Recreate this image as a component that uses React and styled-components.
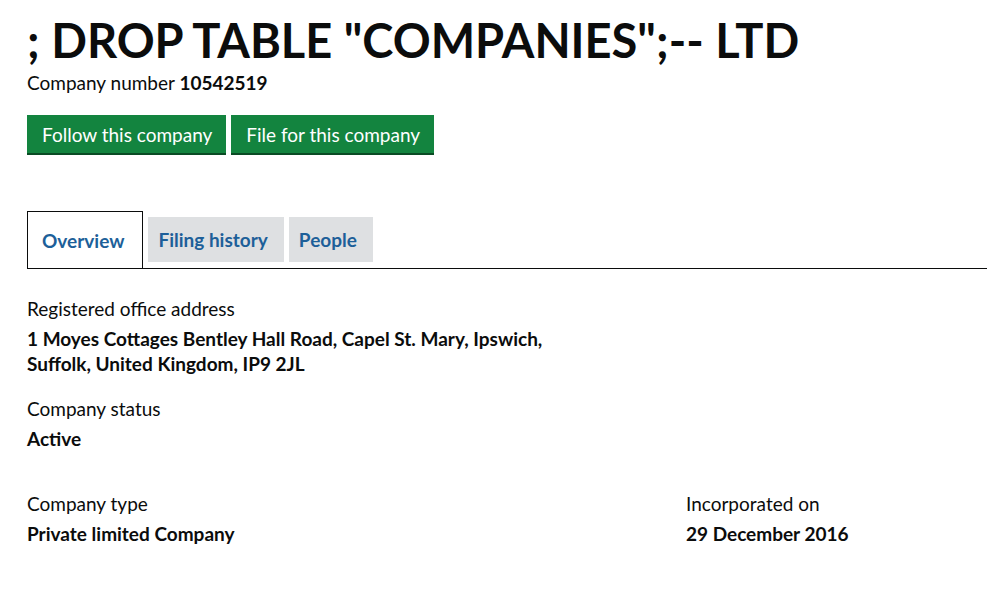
import React from "react";
import styled, { createGlobalStyle } from "styled-components";

const GlobalStyle = createGlobalStyle`
  html, body {
    margin: 0;
    padding: 0;
    background: #ffffff;
  }
  body {
    font-family: Lato, "Liberation Sans", Arial, sans-serif;
    color: #0b0c0c;
  }
`;

const Page = styled.div`
  padding: 13px 8px 0 27px;
`;

const Title = styled.h1`
  margin: 0;
  font-size: 47px;
  line-height: 54px;
  font-weight: 700;
  color: #0b0c0c;
`;

const Subtitle = styled.p`
  margin: 3px 0 0;
  font-size: 19px;
  line-height: 26px;
  strong {
    font-weight: 700;
  }
`;

const Actions = styled.div`
  display: flex;
  gap: 5px;
  margin-top: 19px;
`;

const GreenButton = styled.button`
  height: 40px;
  padding: 0 14px 0 15px;
  background: #13843f;
  color: #ffffff;
  border: none;
  border-bottom: 2px solid #0a4b24;
  border-radius: 0;
  font-family: inherit;
  font-size: 19px;
  cursor: pointer;
`;

const Tabs = styled.div`
  display: flex;
  align-items: flex-start;
  gap: 5px;
  margin-top: 56px;
  border-bottom: 1px solid #0b0c0c;
`;

const Tab = styled.a`
  display: flex;
  align-items: center;
  box-sizing: border-box;
  font-size: 19px;
  font-weight: 700;
  color: #1d5f99;
  text-decoration: none;
  background: ${(p) => (p.$active ? "#ffffff" : "#dee0e2")};
  height: ${(p) => (p.$active ? "57px" : "45px")};
  margin-top: ${(p) => (p.$active ? "0" : "6px")};
  margin-bottom: ${(p) => (p.$active ? "-1px" : "6px")};
  padding: ${(p) => (p.$active ? "0 18px 0 14px" : "0 16px 0 10px")};
  border: ${(p) => (p.$active ? "1px solid #0b0c0c" : "none")};
  border-bottom: none;
`;

const Details = styled.div`
  display: grid;
  grid-template-columns: 659px 1fr;
  margin-top: 27px;
`;

const Field = styled.div`
  grid-column: ${(p) => p.$col || "1 / 2"};
  grid-row: ${(p) => p.$row || "auto"};
  margin-bottom: ${(p) => p.$gap || "20px"};
`;

const Label = styled.div`
  font-size: 19px;
  line-height: 25px;
  color: #0b0c0c;
`;

const Value = styled.div`
  margin-top: 5px;
  font-size: 19px;
  line-height: 25px;
  font-weight: 700;
  color: #0b0c0c;
  max-width: ${(p) => p.$max || "none"};
`;

export default function App() {
  return (
    <Page>
      <GlobalStyle />
      <Title>; DROP TABLE "COMPANIES";-- LTD</Title>
      <Subtitle>
        Company number <strong>10542519</strong>
      </Subtitle>
      <Actions>
        <GreenButton>Follow this company</GreenButton>
        <GreenButton>File for this company</GreenButton>
      </Actions>
      <Tabs>
        <Tab $active href="#">Overview</Tab>
        <Tab href="#">Filing history</Tab>
        <Tab href="#">People</Tab>
      </Tabs>
      <Details>
        <Field>
          <Label>Registered office address</Label>
          <Value $max="550px">
            1 Moyes Cottages Bentley Hall Road, Capel St. Mary, Ipswich, Suffolk, United Kingdom, IP9 2JL
          </Value>
        </Field>
        <Field $gap="40px">
          <Label>Company status</Label>
          <Value>Active</Value>
        </Field>
        <Field>
          <Label>Company type</Label>
          <Value>Private limited Company</Value>
        </Field>
        <Field $col="2 / 3" $row="3">
          <Label>Incorporated on</Label>
          <Value>29 December 2016</Value>
        </Field>
      </Details>
    </Page>
  );
}
